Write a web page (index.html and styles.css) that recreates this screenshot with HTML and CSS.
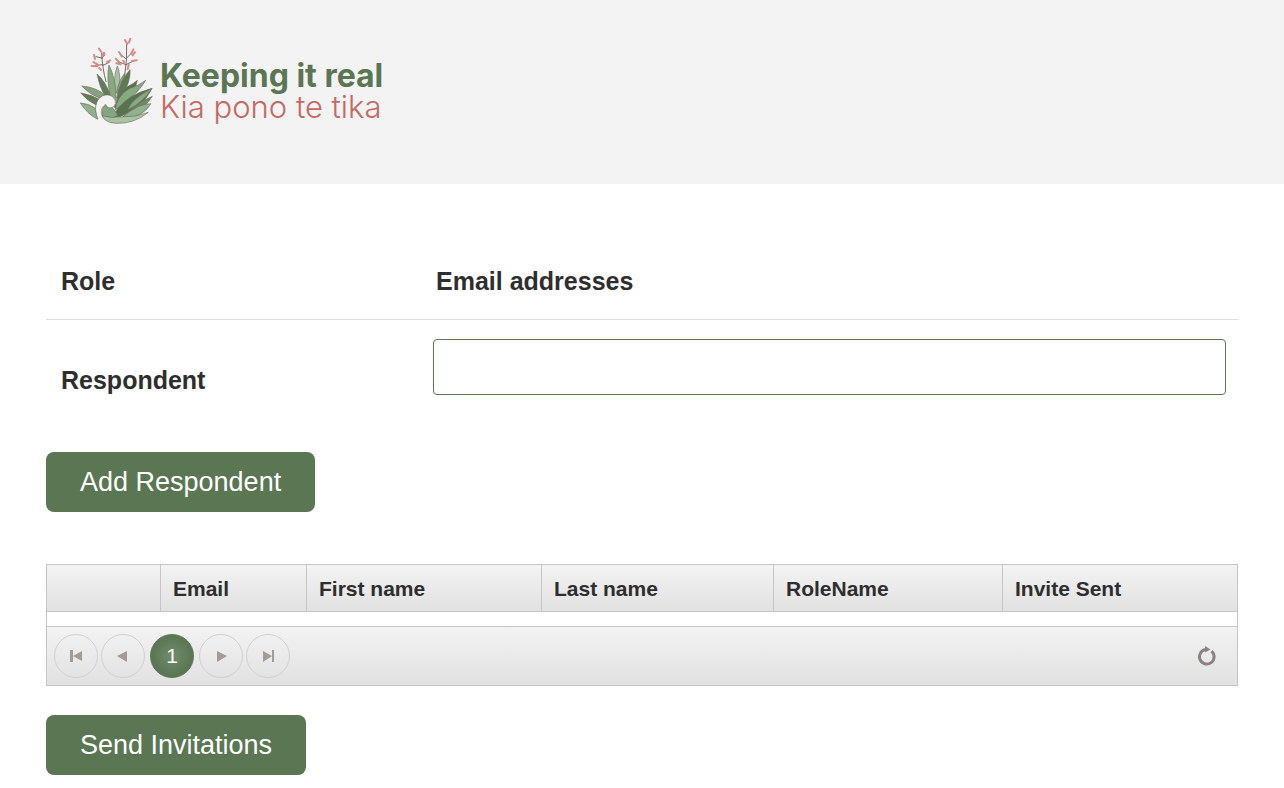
FILE: index.html
```html
<!DOCTYPE html>
<html lang="en">
<head>
<meta charset="utf-8">
<meta name="viewport" content="width=device-width, initial-scale=1">
<title>Keeping it real - Invitations</title>
<link rel="stylesheet" href="styles.css">
</head>
<body>
<header class="site-header">
  <a class="logo" href="#">
    <svg class="logo-mark" viewBox="27 21 225 261" aria-hidden="true">
      <g fill="none" stroke="#7a6863" stroke-width="3" stroke-linecap="round">
        <path d="M108 155Q98 120 95 70M99 104L76 106M99 106L118 97M96 84L78 80M96 84L105 74"/>
        <path d="M164 138Q172 90 170 38M169 104L148 97M168 104L192 92M170 88L150 72M170 84L188 66"/>
      </g>
      <g fill="none" stroke="#d98a86" stroke-width="6" stroke-linecap="round">
        <path d="M87 56L94 66M101 68L98 78M72 74L75 87M65 108L82 109M70 96L83 104M111 96L120 91M88 114L93 120M103 69L100 77"/>
        <path d="M165 30L172 42M181 26L177 38M147 66L155 79M183 72L190 58M195 66L188 76M137 86L147 96M139 100L152 103M186 93L200 91M160 92L162 98M176 104L173 118"/>
      </g>
      <g stroke="#7b6c64" stroke-width="2" stroke-linejoin="round">
        <path fill="#a5c4a0" d="M142 108Q153 132 148 185L136 190Q129 140 142 108Z"/>
        <path fill="#5f7d58" d="M81 132Q106 152 126 205L104 196Q88 170 81 132Z"/>
        <path fill="#7fa77b" d="M163 131Q166 160 147 195L140 188Q146 152 163 131Z"/>
        <path fill="#5d7955" d="M180 119Q184 155 148 212L140 205Q150 150 180 119Z"/>
        <path fill="#83ab7f" d="M117 105Q138 145 139 212L122 200Q108 150 117 105Z"/>
        <path fill="#83a47e" d="M35 168Q82 172 108 198L92 206Q58 193 35 168Z"/>
        <path fill="#607d5a" d="M32 189Q66 194 90 210L82 227Q52 213 32 189Z"/>
        <path fill="#90b18b" d="M31 219Q58 220 79 237L83 268Q52 252 31 219Z"/>
        <path fill="#56734f" d="M202 151Q190 162 172 170Q143 193 133 232L146 240Q194 200 202 151Z"/>
        <path fill="#83ab7f" d="M227 151Q208 188 136 240Q140 198 177 176Q205 168 227 151Z"/>
        <path fill="#56734f" d="M246 175Q210 184 181 202Q146 226 126 262L150 260Q216 237 246 175Z"/>
        <path fill="#83ab7f" d="M246 175Q218 219 174 239Q183 208 246 175Z"/>
        <path fill="#6b8a64" d="M247 199Q214 212 191 234L158 262Q216 248 247 199Z"/>
        <path fill="#90b18b" d="M243 221Q205 220 155 263Q215 267 243 221Z"/>
        <path fill="#82a77d" d="M122 229Q132 235 143 256L126 265Q105 258 98 262Q91 232 108 226Z"/>
      </g>
      <path fill="#f3f3f3" d="M86 273C72 242 75 209 98 198C121 187 142 205 136 222C131 235 113 239 107 223C90 234 91 260 106 270L96 280Z"/>
      <path fill="#a5c4a0" stroke="#7b6c64" stroke-width="2" d="M96 257Q123 266 154 261Q197 262 235 247Q193 282 137 280Q105 278 96 257Z"/>
      <path fill="none" stroke="#7b6c64" stroke-width="2" d="M84 267C71 239 75 207 98 197C119 188 138 203 136 220M136 222C130 237 111 238 107 223C92 233 91 248 98 259"/>
    </svg>
    <span class="logo-text">
      <span class="logo-title">Keeping it real</span>
      <span class="logo-subtitle">Kia pono te tika</span>
    </span>
  </a>
</header>
<main class="page">
  <form class="invite-form">
    <table class="roles">
      <colgroup><col class="role-column"><col></colgroup>
      <thead>
        <tr><th scope="col">Role</th><th scope="col">Email addresses</th></tr>
      </thead>
      <tbody>
        <tr>
          <th scope="row"><label for="respondent">Respondent</label></th>
          <td><input class="email-input" id="respondent" type="text"></td>
        </tr>
      </tbody>
    </table>
    <button class="button" type="button">Add Respondent</button>
    <section class="grid">
      <table class="grid-table">
        <colgroup>
          <col class="col-actions"><col class="col-email"><col class="col-first"><col class="col-last"><col class="col-role"><col class="col-sent">
        </colgroup>
        <thead>
          <tr>
            <td></td>
            <th scope="col">Email</th>
            <th scope="col">First name</th>
            <th scope="col">Last name</th>
            <th scope="col">RoleName</th>
            <th scope="col">Invite Sent</th>
          </tr>
        </thead>
      </table>
      <div class="grid-body"></div>
      <nav class="pager" aria-label="Pages">
        <button class="page-button" type="button" aria-label="First page"><svg viewBox="0 0 16 16"><path d="M2 2h3v12H2zM14 3v10L5 8z"/></svg></button>
        <button class="page-button" type="button" aria-label="Previous page"><svg viewBox="0 0 16 16"><path d="M12 3v11L2 8z"/></svg></button>
        <button class="page-button current" type="button" aria-current="page">1</button>
        <button class="page-button" type="button" aria-label="Next page"><svg viewBox="0 0 16 16"><path d="M4 3v11l10-6z"/></svg></button>
        <button class="page-button" type="button" aria-label="Last page"><svg viewBox="0 0 16 16"><path d="M12 2h2v12h-2zM3 3v11l9-6z"/></svg></button>
        <button class="refresh" type="button" aria-label="Refresh"><svg viewBox="0 0 20 20"><path class="ring" d="M15.500 5.200A7.300 7.300 0 1 1 9.500 3.600"/><path d="M9 0l5.500 3.500L9 6.500z"/></svg></button>
      </nav>
    </section>
    <button class="button" type="button">Send Invitations</button>
  </form>
</main>
</body>
</html>
```
FILE: styles.css
```css
* {
  box-sizing: border-box;
}

body {
  margin: 0;
  background: #fff;
  color: #2e2e2e;
  font-family: "Liberation Sans", Arial, sans-serif;
}

button {
  font-family: inherit;
  cursor: pointer;
}

.site-header {
  padding: 37px 79px 60px;
  background: #f3f3f3;
}

.logo {
  display: inline-flex;
  gap: 6px;
  text-decoration: none;
  vertical-align: top;
}

.logo-mark {
  width: 75px;
  height: 87px;
}

.logo-text {
  display: flex;
  flex-direction: column;
  padding-top: 23px;
  font-family: Inter, sans-serif;
  line-height: 31px;
  white-space: nowrap;
}

.logo-title {
  color: #5a7653;
  font-size: 32px;
  font-weight: 700;
}

.logo-subtitle {
  color: #c36a65;
  font-size: 31px;
  font-weight: 300;
}

.page {
  padding: 59px 46px 13px;
}

.invite-form {
  display: flex;
  flex-direction: column;
  align-items: flex-start;
}

.roles {
  width: 100%;
  margin-bottom: 12px;
  border-collapse: separate;
  border-spacing: 0;
  table-layout: fixed;
  font-size: 25px;
  line-height: 30px;
}

.role-column {
  width: 375px;
}

.roles th {
  padding: 0 15px;
  text-align: left;
}

.roles thead th {
  height: 77px;
  border-bottom: 1px solid #ddd;
}

.roles tbody th {
  height: 120px;
}

.roles td {
  padding: 19px 12px;
  vertical-align: top;
}

.email-input {
  display: block;
  width: 100%;
  height: 56px;
  padding: 8px 12px;
  border: 1px solid #5a7653;
  border-radius: 4px;
  background: #fff;
  font: inherit;
}

.button {
  height: 60px;
  padding: 0 34px;
  border: 0;
  border-radius: 8px;
  background: #5a7653;
  color: #fff;
  font-size: 27px;
}

.grid {
  width: 100%;
  margin: 52px 0 29px;
  border: 1px solid #c5c5c5;
}

.grid-table {
  width: 100%;
  border-spacing: 0;
  table-layout: fixed;
  background: linear-gradient(#f3f3f3, #e1e1e1);
  font-size: 21px;
}

.grid-table th,
.grid-table td {
  height: 47px;
  padding: 2px 12px 0;
  border-bottom: 1px solid #c5c5c5;
  text-align: left;
}

.grid-table th {
  border-left: 1px solid #c5c5c5;
}

.col-actions {
  width: 113px;
}

.col-email {
  width: 146px;
}

.col-first {
  width: 235px;
}

.col-last {
  width: 232px;
}

.col-role {
  width: 229px;
}

.col-sent {
  width: 235px;
}

.grid-body {
  min-height: 14px;
}

.pager {
  display: flex;
  gap: 3px;
  padding: 7px;
  border-top: 1px solid #c5c5c5;
  background: linear-gradient(#f3f3f3, #e1e1e1);
}

.page-button,
.refresh {
  display: flex;
  align-items: center;
  justify-content: center;
  width: 44px;
  height: 44px;
  padding: 0;
  border: 1px solid #d0d0d0;
  border-radius: 50%;
  background: transparent;
  font-size: 21px;
}

.page-button svg {
  width: 16px;
  height: 16px;
  fill: #a39b97;
}

.page-button.current {
  margin: 0 2px;
  border-color: #5a7653;
  background: radial-gradient(circle, #738d6d 0, #5a7653 65%);
  color: #fff;
}

.refresh {
  margin-left: auto;
  margin-right: 2px;
  border: 0;
}

.refresh svg {
  width: 20px;
  height: 20px;
  fill: #8c837e;
}

.refresh .ring {
  fill: none;
  stroke: #8c837e;
  stroke-width: 3;
}
```
